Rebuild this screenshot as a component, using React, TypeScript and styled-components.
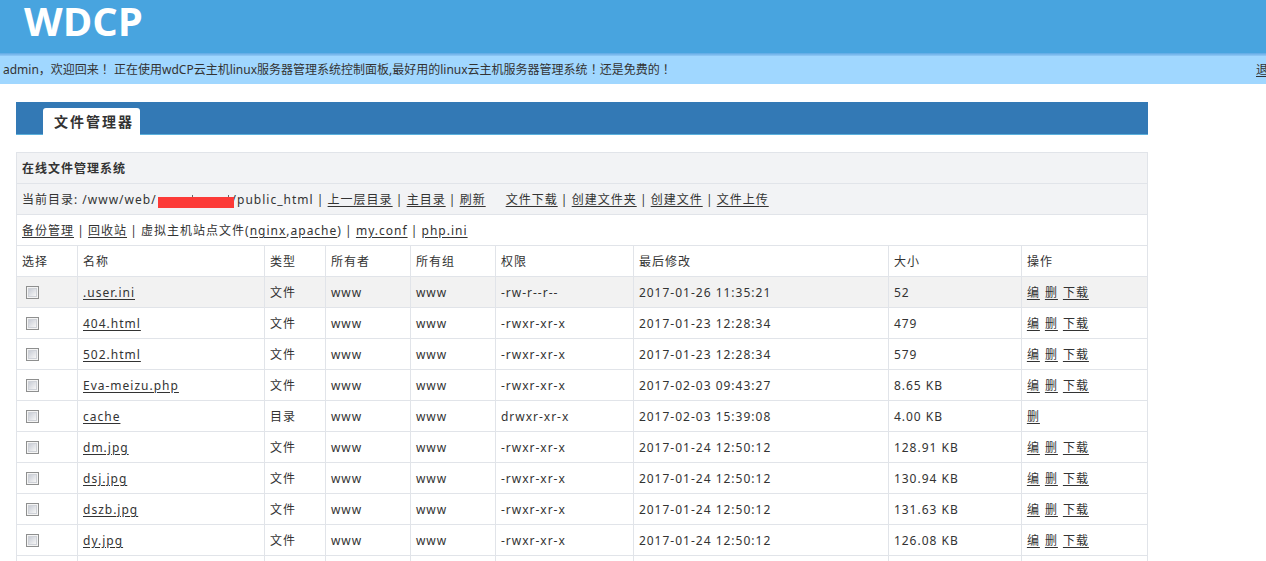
import React from "react";
import styled, { createGlobalStyle } from "styled-components";

const GlobalStyle = createGlobalStyle`
  body {
    margin: 0;
    background: #fff;
    color: #333;
    font-family: "Noto Sans", "Noto Sans CJK SC", sans-serif;
    font-size: 12px;
    line-height: 18px;
  }
  a { color: inherit; text-underline-offset: 2px; }
`;

const Page = styled.div`
  height: 100vh;
  overflow: hidden;
`;

const Header = styled.header`
  box-sizing: border-box;
  height: 53px;
  padding-left: 24px;
  background: #48a4df;
`;

const Logo = styled.h1`
  margin: 0;
  color: #fff;
  font-family: "Open Sans", sans-serif;
  font-size: 40px;
  font-weight: 700;
  line-height: 42px;
`;

const WelcomeBar = styled.div`
  display: flex;
  justify-content: space-between;
  height: 28px;
  padding: 3px 0 0 3px;
  background: linear-gradient(#5ea9e4, #92c8f6 3px, #a0d7ff 3px);
  line-height: 28px;
  white-space: nowrap;
`;

const Punct = styled.span`
  font-family: "Noto Sans CJK TC", sans-serif;
  line-height: 1;
`;

const LogoutLink = styled.a`
  width: 10px;
`;

const Main = styled.main`
  margin: 18px 118px 0 16px;
`;

const TabBar = styled.nav`
  display: flex;
  align-items: flex-end;
  height: 32px;
  padding-left: 27px;
  background: #3379b5;
  border-bottom: 1px solid #5bb0dc;
`;

const Tab = styled.h2`
  margin: 0 0 -1px;
  padding: 0 6px 0 11px;
  background: #fff;
  border-radius: 3px 3px 0 0;
  font-size: 14px;
  line-height: 27px;
  letter-spacing: 2px;
`;

const FileTable = styled.table`
  width: 100%;
  margin-top: 17px;
  border-collapse: collapse;
  table-layout: fixed;
  letter-spacing: 1px;
`;

const Row = styled.tr<{ $bg?: string }>`
  height: 31px;
  background: ${(p) => p.$bg ?? "#fff"};
`;

const Cell = styled.td`
  padding: 2px 5px 0;
  border: 1px solid #e1e4e9;
  text-align: left;
  font-weight: 400;
  white-space: nowrap;
`;

const TitleCell = styled(Cell)`
  font-weight: 700;
`;

const CheckCell = styled(Cell)`
  padding: 0 9px;
`;

const Separator = styled.span`
  display: inline-block;
  width: 14px;
  text-align: center;
`;

const Gap = styled.span`
  display: inline-block;
  width: 20px;
`;

const Redacted = styled.span`
  position: relative;
  display: inline-block;
  width: 76px;
  height: 11px;
  margin: 0 -2px 0 1px;
  background: #fc3a37;
  vertical-align: -4px;
  &::before, &::after {
    content: "";
    position: absolute;
    top: -2px;
    left: 34px;
    width: 1px;
    height: 2px;
    background: #666;
  }
  &::after { left: 70px; }
`;

const Check = styled.input`
  appearance: none;
  display: block;
  box-sizing: border-box;
  width: 13px;
  height: 13px;
  margin: 0;
  border: 1px solid #8e8f8f;
  background: linear-gradient(135deg, #c9cdd6, #f6f6f6) content-box, #f4f4f4;
  padding: 2px;
  box-shadow: inset 0 0 0 1px #f4f4f4, inset 0 0 0 2px #cfd2d8;
`;

const Actions = styled.div`
  display: flex;
  gap: 5px;
`;

const columns: { label: string; width?: number }[] = [
  { label: "选择", width: 61 },
  { label: "名称" },
  { label: "类型", width: 61 },
  { label: "所有者", width: 85 },
  { label: "所有组", width: 85 },
  { label: "权限", width: 138 },
  { label: "最后修改", width: 255 },
  { label: "大小", width: 133 },
  { label: "操作", width: 126 },
];

const files = [
  [".user.ini", "文件", "-rw-r--r--", "2017-01-26 11:35:21", "52"],
  ["404.html", "文件", "-rwxr-xr-x", "2017-01-23 12:28:34", "479"],
  ["502.html", "文件", "-rwxr-xr-x", "2017-01-23 12:28:34", "579"],
  ["Eva-meizu.php", "文件", "-rwxr-xr-x", "2017-02-03 09:43:27", "8.65 KB"],
  ["cache", "目录", "drwxr-xr-x", "2017-02-03 15:39:08", "4.00 KB"],
  ["dm.jpg", "文件", "-rwxr-xr-x", "2017-01-24 12:50:12", "128.91 KB"],
  ["dsj.jpg", "文件", "-rwxr-xr-x", "2017-01-24 12:50:12", "130.94 KB"],
  ["dszb.jpg", "文件", "-rwxr-xr-x", "2017-01-24 12:50:12", "131.63 KB"],
  ["dy.jpg", "文件", "-rwxr-xr-x", "2017-01-24 12:50:12", "126.08 KB"],
];

const Link = ({ children }: { children: React.ReactNode }) => <a href="#">{children}</a>;
const Bar = () => <Separator>|</Separator>;

export default function App() {
  return (
    <Page>
      <GlobalStyle />
      <Header>
        <Logo>WDCP</Logo>
      </Header>
      <WelcomeBar>
        <span>
          admin，欢迎回来<Punct>！</Punct> 正在使用wdCP云主机linux服务器管理系统控制面板,最好用的linux云主机服务器管理系统
          <Punct>！</Punct>还是免费的<Punct>！</Punct>
        </span>
        <LogoutLink href="#">退出</LogoutLink>
      </WelcomeBar>
      <Main>
        <TabBar>
          <Tab>文件管理器</Tab>
        </TabBar>
        <FileTable>
          <colgroup>
            {columns.map((c) => (
              <col key={c.label} width={c.width} />
            ))}
          </colgroup>
          <tbody>
            <Row $bg="#f2f3f5">
              <TitleCell colSpan={9}>在线文件管理系统</TitleCell>
            </Row>
            <Row $bg="#f2f3f5">
              <Cell colSpan={9}>
                当前目录: /www/web/<Redacted />/public_html<Bar /><Link>上一层目录</Link><Bar />
                <Link>主目录</Link><Bar /><Link>刷新</Link><Gap /><Link>文件下载</Link><Bar />
                <Link>创建文件夹</Link><Bar /><Link>创建文件</Link><Bar /><Link>文件上传</Link>
              </Cell>
            </Row>
            <Row>
              <Cell colSpan={9}>
                <Link>备份管理</Link><Bar /><Link>回收站</Link><Bar />虚拟主机站点文件(<Link>nginx</Link>,
                <Link>apache</Link>)<Bar /><Link>my.conf</Link><Bar /><Link>php.ini</Link>
              </Cell>
            </Row>
            <Row>
              {columns.map((c) => (
                <Cell as="th" scope="col" key={c.label}>
                  {c.label}
                </Cell>
              ))}
            </Row>
            {files.map(([name, type, mode, modified, size], i) => (
              <Row key={name} $bg={i === 0 ? "#f2f2f2" : undefined}>
                <CheckCell>
                  <Check type="checkbox" aria-label={name} />
                </CheckCell>
                <Cell>
                  <Link>{name}</Link>
                </Cell>
                <Cell>{type}</Cell>
                <Cell>www</Cell>
                <Cell>www</Cell>
                <Cell>{mode}</Cell>
                <Cell>{modified}</Cell>
                <Cell>{size}</Cell>
                <Cell>
                  <Actions>
                    {type === "文件" && <Link>编</Link>}
                    <Link>删</Link>
                    {type === "文件" && <Link>下载</Link>}
                  </Actions>
                </Cell>
              </Row>
            ))}
            <Row>
              {columns.map((c) => (
                <Cell key={c.label} />
              ))}
            </Row>
          </tbody>
        </FileTable>
      </Main>
    </Page>
  );
}
